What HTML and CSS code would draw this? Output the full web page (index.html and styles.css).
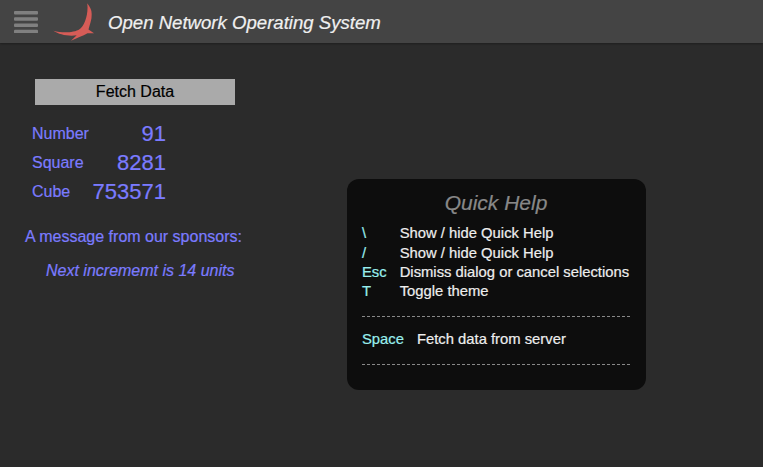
FILE: index.html
```html
<!DOCTYPE html>
<html lang="en">
<head>
  <meta charset="UTF-8"/>
  <title>Open Network Operating System</title>
  <link rel="stylesheet" href="styles.css">
</head>
<body>

  <!-- Masthead -->
  <div class="mast">
    <svg class="nav-icon" width="24" height="22" viewBox="0 0 24 22">
      <rect x="0" y="0" width="24" height="3.5" rx="1"/>
      <rect x="0" y="6.2" width="24" height="3.5" rx="1"/>
      <rect x="0" y="12.5" width="24" height="3.5" rx="1"/>
      <rect x="0" y="18.8" width="24" height="3.5" rx="1"/>
    </svg>
    <svg class="logo" width="42" height="38" viewBox="0 0 42 38">
      <path d="M34.3 0.3 C37 4 38.7 7 38.7 11 C39 17 36.5 22 35.5 26.5 L41 30.3 L34.5 30.3 C32 31.5 29.5 33 27 33.7 L18 37.7 L23.7 32.3 C15 33.5 6 31.5 0.3 27.7 C5 29 10 29.5 14 29.3 C20 29 25 28 28 25 C32 21 35.5 11 34.3 0.3 Z"/>
    </svg>
    <span class="mast-title">Open Network Operating System</span>
  </div>

  <!-- Sample view -->
  <div class="view">
    <div class="fetch-button">Fetch Data</div>
    <div class="data-rows">
      <div class="data-row"><span class="data-label">Number</span><span class="data-value">91</span></div>
      <div class="data-row"><span class="data-label">Square</span><span class="data-value">8281</span></div>
      <div class="data-row"><span class="data-label">Cube</span><span class="data-value">753571</span></div>
    </div>
    <p class="sponsor">A message from our sponsors:</p>
    <p class="sponsor-msg">Next incrememt is 14 units</p>
  </div>

  <!-- Quick help overlay -->
  <div class="quick-help">
    <h2 class="help-title">Quick Help</h2>
    <div class="help-keys help-list">
      <span class="key">\</span><span class="desc">Show / hide Quick Help</span>
      <span class="key">/</span><span class="desc">Show / hide Quick Help</span>
      <span class="key">Esc</span><span class="desc">Dismiss dialog or cancel selections</span>
      <span class="key">T</span><span class="desc">Toggle theme</span>
    </div>
    <div class="help-rule"></div>
    <div class="help-keys">
      <span class="key">Space</span><span class="desc">Fetch data from server</span>
    </div>
    <div class="help-rule"></div>
  </div>

</body>
</html>
```

FILE: styles.css
```css
/* Page */
body {
  margin: 0;
  height: 467px;
  overflow: hidden;
  background-color: #2b2b2b;
  font-family: "Liberation Sans", Arial, sans-serif;
  -webkit-text-stroke: 0.2px;
}

p {
  margin: 0;
}

/* Masthead */
.mast {
  display: flex;
  align-items: center;
  height: 43px;
  background-color: #444;
  box-shadow: 0 1px 2px rgba(0, 0, 0, 0.3);
}

.nav-icon {
  margin-left: 14px;
  fill: #808080;
}

.logo {
  margin: 0 0 0 15px;
  fill: #d65c57;
}

.mast-title {
  margin: 2px 0 0 13px;
  color: #f0f0f0;
  font-size: 18.6px;
  font-style: italic;
}

/* Sample view */
.view {
  width: 270px;
  padding-top: 36px;
  color: #7b7bff;
}

.fetch-button {
  width: 200px;
  height: 26px;
  margin-left: 35px;
  background-color: #aaa;
  color: #000;
  font-size: 16px;
  line-height: 26px;
  text-align: center;
}

.data-rows {
  margin: 14px 0 0 32px;
  width: 134px;
}

.data-row {
  display: flex;
  justify-content: space-between;
  align-items: center;
  height: 29px;
}

.data-label {
  font-size: 16px;
  line-height: 29px;
  align-self: flex-start;
}

.data-value {
  font-size: 22px;
  line-height: 29px;
}

.sponsor {
  margin: 22px 0 0 25px;
  font-size: 16px;
  line-height: 18px;
}

.sponsor-msg {
  margin: 16px 0 0 46px;
  font-size: 16px;
  font-style: italic;
  line-height: 18px;
}

/* Quick help */
.quick-help {
  position: absolute;
  left: 347px;
  top: 179px;
  box-sizing: border-box;
  width: 299px;
  height: 211px;
  padding: 0 16px 0 15px;
  border-radius: 12px;
  background-color: #0d0d0d;
}

.help-title {
  margin: 11px 0 9px;
  color: #888;
  font-size: 21px;
  font-style: italic;
  font-weight: normal;
  line-height: 25px;
  text-align: center;
}

.help-keys {
  display: grid;
  grid-template-columns: auto auto;
  justify-content: start;
  column-gap: 13px;
  font-size: 14.8px;
  line-height: 19px;
}

/* first row sits a pixel further from the rest */
.help-list {
  grid-template-rows: 20px;
}

.key {
  color: #9ee;
}

.desc {
  color: #eee;
}

.help-rule {
  height: 0;
  margin: 15px 0 13px;
  border-top: 1px dashed #888;
}
```
